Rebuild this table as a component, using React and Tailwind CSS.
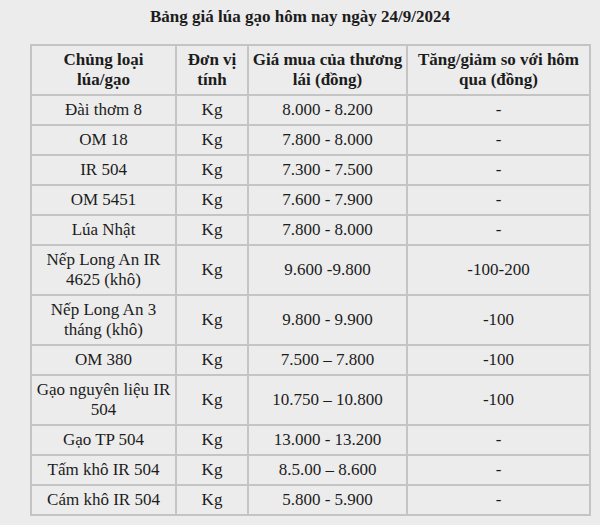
import React from 'react';

const rows = [
  ['Đài thơm 8', 'Kg', '8.000 - 8.200', '-'],
  ['OM 18', 'Kg', '7.800 - 8.000', '-'],
  ['IR 504', 'Kg', '7.300 - 7.500', '-'],
  ['OM 5451', 'Kg', '7.600 - 7.900', '-'],
  ['Lúa Nhật', 'Kg', '7.800 - 8.000', '-'],
  ['Nếp Long An IR 4625 (khô)', 'Kg', '9.600 -9.800', '-100-200'],
  ['Nếp Long An 3 tháng (khô)', 'Kg', '9.800 - 9.900', '-100'],
  ['OM 380', 'Kg', '7.500 – 7.800', '-100'],
  ['Gạo nguyên liệu IR 504', 'Kg', '10.750 – 10.800', '-100'],
  ['Gạo TP 504', 'Kg', '13.000 - 13.200', '-'],
  ['Tấm khô IR 504', 'Kg', '8.5.00 – 8.600', '-'],
  ['Cám khô IR 504', 'Kg', '5.800 - 5.900', '-'],
];

const cell = 'border-2 border-[#c4c4c4] px-[2px] py-1 text-center align-middle';

export default function App() {
  return (
    <div className="min-h-[525px] w-[600px] bg-[#ececec] pt-[7px] text-[17px] leading-[20px] text-[#1c1c1c] font-['Liberation_Serif','Times_New_Roman',serif]">
      <h1 className="text-center text-[17px] font-bold leading-[20px]">
        Bảng giá lúa gạo hôm nay ngày 24/9/2024
      </h1>
      <table className="ml-[30px] mt-[17px] w-[559px] table-fixed border-collapse border border-[#a8a8a8]">
        <colgroup>
          <col className="w-[145px]" />
          <col className="w-[72px]" />
          <col className="w-[159px]" />
          <col className="w-[183px]" />
        </colgroup>
        <thead>
          <tr className="h-[50px] font-bold">
            <th className={cell}>Chủng loại<br />lúa/gạo</th>
            <th className={cell}>Đơn vị<br />tính</th>
            <th className={cell}>Giá mua của thương<br />lái (đồng)</th>
            <th className={cell}>Tăng/giảm so với hôm<br />qua (đồng)</th>
          </tr>
        </thead>
        <tbody>
          {rows.map((r) => (
            <tr key={r[0]} className="h-[30px]">
              {r.map((v, i) => (
                <td key={i} className={cell}>
                  {v}
                </td>
              ))}
            </tr>
          ))}
        </tbody>
      </table>
    </div>
  );
}
